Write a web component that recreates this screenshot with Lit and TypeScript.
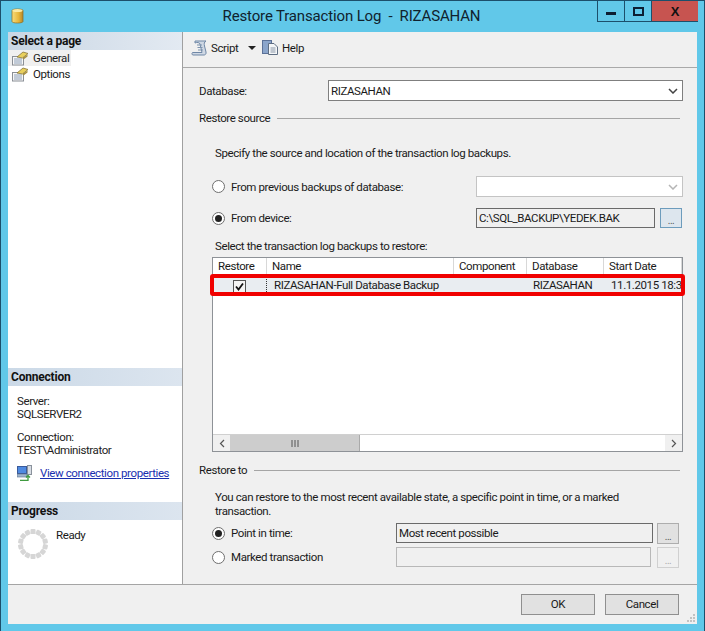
import { LitElement, html, css, svg } from "lit";
import { customElement } from "lit/decorators.js";

const pageIcon = html`<svg class="pico" width="17" height="16" viewBox="0 0 17 16">
  <rect x="0.5" y="6.5" width="11" height="8.5" fill="#f7f7f7" stroke="#8a8f96"/>
  <path d="M2 9h8M2 11h8M2 13h8" stroke="#8c9fb8" stroke-width="1"/>
  <path d="M5 7 L11 2 L16 3.5 L10.5 8Z" fill="#e8cf5c" stroke="#86753a" stroke-width="0.8"/>
  <path d="M11 8 L15.5 4.5 L15.5 6.5 L11.5 9.5Z" fill="#a88f3c"/>
</svg>`;

const spinner = html`<svg width="32" height="32" viewBox="0 0 32 32">
  ${Array.from({ length: 14 }, (_, i) => svg`<rect x="13.5" y="1" width="5" height="5" rx="1" fill="#d6d6d6" transform="rotate(${(i * 360) / 14} 16 16)"/>`)}
</svg>`;

const radio = (on: boolean) => html`<span class="radio ${on ? "on" : ""}"></span>`;

@customElement("app-root")
export class AppRoot extends LitElement {
  static styles = css`
    :host { display: block; width: 705px; height: 631px; overflow: hidden; font-family: "Roboto", "Liberation Sans", sans-serif; font-size: 11.5px; letter-spacing: -0.4px; color: #1a1a1a; }
    .win { box-sizing: border-box; width: 705px; height: 631px; background: #61c8e9; border: 1px solid #1c4f6b; border-bottom: none; display: flex; flex-direction: column; padding: 0 7px 7px 7px; }
    .title { height: 31px; flex: none; display: grid; grid-template-columns: 1fr auto 1fr; align-items: start; margin-right: -1px; }
    .title .db { margin: 6px 0 0 2px; }
    .title .t { font-size: 15px; letter-spacing: -0.15px; line-height: 18px; margin-top: 6px; padding-right: 3px; color: #10222e; white-space: pre; }
    .wbtns { justify-self: end; display: flex; height: 20px; border: 1px solid #1c4f6b; border-top: none; border-right: none; }
    .wb { width: 26px; display: flex; align-items: center; justify-content: center; border-right: 1px solid #1c4f6b; }
    .wb.x { width: 46px; background: #c75450; border-right: none; font: bold 13px "Liberation Sans", sans-serif; color: #111; }
    .bar { width: 10px; height: 3px; background: #0d1f33; margin-top: 4px; }
    .sq { width: 7px; height: 5px; border: 2px solid #0d1f33; }
    .body { flex: 1; display: flex; min-height: 0; background: #f0f0f0; }
    .side { width: 175px; flex: none; box-sizing: border-box; background: #fff; border-right: 1px solid #a0a0a0; display: flex; flex-direction: column; }
    .hd { height: 18px; line-height: 18px; padding-left: 3px; font-weight: 700; font-size: 12px; letter-spacing: -0.2px; color: #111; background: linear-gradient(90deg, #cbd9e7, #dce5ef); flex: none; }
    .hd.sel { background: linear-gradient(90deg, #c9d6e4, #e3eaf2); }
    .nav { flex: 1; }
    .item { height: 16px; line-height: 16px; display: flex; align-items: center; padding-left: 4px; width: fit-content; }
    .item.act { background: #f0f0f0; padding-right: 2px; }
    .item .pico { margin-right: 4px; }
    .conn { padding: 9px 0 0 9px; height: 116px; box-sizing: border-box; line-height: 13px; flex: none; color: #222; }
    .conn p { margin: 0 0 10px; }
    .link { display: flex; align-items: center; gap: 7px; margin-top: -2px; color: #1a2fb0; white-space: nowrap; }
    .link svg { flex: none; }
    .link span { text-decoration: underline; }
    .prog { height: 64px; flex: none; display: flex; padding: 8px 0 0 9px; box-sizing: border-box; }
    .prog span { margin: 0 0 0 7px; line-height: 14px; }
    .main { flex: 1; display: flex; flex-direction: column; min-width: 0; }
    .tools { height: 36px; flex: none; box-sizing: border-box; border-bottom: 1px solid #a9a9a9; display: flex; align-items: center; padding: 0 0 4px 8px; }
    .tools span { margin-left: 3px; }
    .arrow { width: 0; height: 0; border: 4px solid transparent; border-top: 4px solid #222; border-bottom: none; margin: 0 6px 0 10px; }
    .form { padding: 12px 14px 0 16px; flex: 1; }
    .row { display: flex; align-items: center; }
    .db-row { height: 21px; }
    .db-row label { width: 129px; }
    .box { box-sizing: border-box; background: #fff; border: 1px solid #7f7f7f; height: 100%; display: flex; align-items: center; padding-left: 2px; }
    .grow { flex: 1; justify-content: space-between; padding-right: 4px; }
    .sec { height: 16px; margin-top: 9px; margin-right: 3px; }
    .sec i { flex: 1; height: 1px; background: #a5a5a5; margin-left: 7px; }
    .note { margin: 19px 0 0 16px; line-height: 16px; }
    .r1 { margin: 15px 0 0 13px; height: 21px; }
    .r2 { margin: 11px 0 0 13px; height: 20px; }
    .radio { box-sizing: border-box; width: 13px; height: 13px; border-radius: 50%; border: 1px solid #6f6f6f; background: #fff; display: flex; align-items: center; justify-content: center; flex: none; }
    .radio.on::after { content: ""; width: 7px; height: 7px; border-radius: 50%; background: #222; }
    .rl { margin-left: 6px; width: 245px; }
    .ro { width: 179px; background: #f0f0f0; border-color: #6a6a6a; }
    .dots { box-sizing: border-box; width: 22px; height: 20px; margin-left: 5px; background: #e1e1e1; border: 1px solid #adadad; font-size: 10px; display: flex; align-items: flex-end; justify-content: center; line-height: 12px; color: #555; }
    .dots.blue { background: #dde6ee; border-color: #6d9cbc; }
    .sel-note { margin: 10px 0 0 16px; line-height: 16px; }
    .table { box-sizing: border-box; margin: 3px 0 0 13px; height: 195px; border: 1px solid #8e9297; background: #fff; display: flex; flex-direction: column; position: relative; overflow: visible; }
    .cols { display: grid; grid-template-columns: 54px 187px 73px 77px 1fr; }
    .th { height: 19px; line-height: 17px; padding-left: 5px; box-sizing: border-box; border-right: 1px solid #d8d8d8; border-bottom: 1px solid #d8d8d8; overflow: hidden; white-space: nowrap; }
    .th:last-child { border-right: none; }
    .td { height: 19px; line-height: 17px; background: #e9edf1; padding-left: 7px; white-space: nowrap; overflow: hidden; }
    .td.c { padding: 0; display: flex; align-items: center; justify-content: center; border-right: 1px dotted #333; box-sizing: border-box; }
    .cb { box-sizing: border-box; width: 13px; height: 13px; background: #f4f4f4; border: 1px solid #555; display: flex; margin-top: -1px; }
    .red { position: absolute; left: -3px; right: -3px; top: 16px; height: 22px; box-sizing: border-box; border: 4px solid #f00000; border-radius: 3px; pointer-events: none; }
    .spacer { flex: 1; }
    .sb { height: 17px; flex: none; display: flex; align-items: stretch; background: #fff; border-top: 1px solid #d0d0d0; box-sizing: border-box; }
    .sb .end { width: 17px; display: flex; align-items: center; justify-content: center; background: #f0f0f0; }
    .thumb { box-sizing: border-box; width: 130px; background: #cdcdcd; border-right: 1px solid #aaa; display: flex; align-items: center; justify-content: center; }
    .rt { margin: 12px 0 0 16px; line-height: 14px; width: 440px; }
    .r3 { margin: 5px 0 0 13px; height: 20px; }
    .r4 { margin: 4px 0 0 13px; height: 20px; }
    .rl2 { margin-left: 6px; width: 165px; }
    .in1 { width: 257px; background: #f0f0f0; border-color: #6a6a6a; height: 20px; }
    .in2 { width: 255px; background: #f0f0f0; border-color: #b8b8b8; height: 20px; }
    .r3 .dots, .r4 .dots { margin-left: 4px; width: 22px; height: 21px; }
    .r4 .dots { margin-left: 6px; background: #f0f0f0; border-color: #d0d0d0; color: #aaa; }
    .foot { height: 40px; flex: none; box-sizing: border-box; background: #f0f0f0; border-top: 1px solid #a5a5a5; display: flex; justify-content: flex-end; gap: 10px; padding: 9px 18px 0 0; position: relative; }
    .btn { width: 74px; height: 21px; box-sizing: border-box; background: #e1e1e1; border: 1px solid #8f8f8f; text-align: center; line-height: 19px; }
    .grip { position: absolute; right: 1px; bottom: 1px; }
  `;

  render() {
    return html`<div class="win">
      <div class="title">
        <svg class="db" width="16" height="18" viewBox="0 0 16 18">
          <defs><linearGradient id="g" x1="0" x2="1"><stop offset="0" stop-color="#f7dc7c"/><stop offset="0.6" stop-color="#e8b63a"/><stop offset="1" stop-color="#b5862a"/></linearGradient></defs>
          <path d="M2 3.5C2 1.5 13 1.5 13 3.5V14.5C13 16.5 2 16.5 2 14.5Z" fill="url(#g)" stroke="#8a6a20" stroke-width="0.7"/>
          <ellipse cx="7.5" cy="3.5" rx="5" ry="1.6" fill="#fbe9a4"/>
        </svg>
        <div class="t">Restore Transaction Log  -  RIZASAHAN</div>
        <div class="wbtns">
          <div class="wb"><div class="bar"></div></div>
          <div class="wb"><div class="sq"></div></div>
          <div class="wb x">X</div>
        </div>
      </div>
      <div class="body">
        <div class="side">
          <div class="hd sel">Select a page</div>
          <div class="nav">
            <div class="item act">${pageIcon}General</div>
            <div class="item">${pageIcon}Options</div>
          </div>
          <div class="hd">Connection</div>
          <div class="conn">
            <p>Server:<br />SQLSERVER2</p>
            <p>Connection:<br />TEST\\Administrator</p>
            <div class="link">
              <svg width="16" height="16" viewBox="0 0 16 16">
                <rect x="0.5" y="1.5" width="9" height="7" fill="#4f8ae0" stroke="#3a5a9a"/>
                <rect x="0" y="9" width="10" height="3" fill="#9fb4cc" stroke="#5a6f8a" stroke-width="0.6"/>
                <rect x="10.5" y="0.5" width="4" height="9" fill="#d8dde4" stroke="#8a929c"/>
                <path d="M3 15.5H11V11M9 12.5L11 10.5L13 12.5" fill="none" stroke="#3f9a3f" stroke-width="1.3"/>
              </svg>
              <span>View connection properties</span>
            </div>
          </div>
          <div class="hd">Progress</div>
          <div class="prog">${spinner}<span>Ready</span></div>
        </div>
        <div class="main">
          <div class="tools">
            <svg width="17" height="16" viewBox="0 0 17 16">
              <path d="M4 1H15C13 2 13 4 13.5 6L15 12C15.5 14 14 15 13 15H2C1 15 0.5 13.5 1.5 12.5H11L9 4C8.7 2.5 6 2 4 3Z" fill="#cfd8e4" stroke="#6f87a6" stroke-width="1"/>
              <path d="M6 5H11M6.5 7.5H11.5M7 10H12" stroke="#7d93ae"/>
            </svg>
            <span style="width:27px">Script</span>
            <i class="arrow"></i>
            <svg width="17" height="17" viewBox="0 0 17 17">
              <rect x="0.5" y="1.5" width="9" height="13" fill="#8ba5cb" stroke="#5b7198"/>
              <path d="M6.5 4.5H12L15.5 8V15.5H6.5Z" fill="#f4f6f8" stroke="#5f6e83"/>
              <path d="M8.5 9H13.5M8.5 11H13.5M8.5 13H13.5" stroke="#8b97a8"/>
            </svg>
            <span>Help</span>
          </div>
          <div class="form">
            <div class="row db-row"><label>Database:</label>
              <div class="box grow" style="flex:1">RIZASAHAN
                <svg width="10" height="6" viewBox="0 0 10 6"><path d="M1 1L5 5L9 1" fill="none" stroke="#444" stroke-width="1.5"/></svg>
              </div>
            </div>
            <div class="row sec">Restore source<i></i></div>
            <div class="note">Specify the source and location of the transaction log backups.</div>
            <div class="row r1">${radio(false)}<span class="rl">From previous backups of database:</span>
              <div class="box grow" style="border-color:#c4c4c4">
                <span></span>
                <svg width="10" height="6" viewBox="0 0 10 6"><path d="M1 1L5 5L9 1" fill="none" stroke="#b5b5b5" stroke-width="1.5"/></svg>
              </div>
            </div>
            <div class="row r2">${radio(true)}<span class="rl">From device:</span>
              <div class="box ro">C:\\SQL_BACKUP\\YEDEK.BAK</div>
              <div class="dots blue">...</div>
            </div>
            <div class="sel-note">Select the transaction log backups to restore:</div>
            <div class="table">
              <div class="cols">
                <div class="th">Restore</div>
                <div class="th">Name</div>
                <div class="th">Component</div>
                <div class="th">Database</div>
                <div class="th">Start Date</div>
                <div class="td c"><span class="cb"><svg width="11" height="11" viewBox="0 0 11 11"><path d="M2 5.5L4.5 8.5L9 2.5" fill="none" stroke="#111" stroke-width="1.8"/></svg></span></div>
                <div class="td">RIZASAHAN-Full Database Backup</div>
                <div class="td"></div>
                <div class="td" style="padding-left:6px">RIZASAHAN</div>
                <div class="td">11.1.2015 18:3</div>
              </div>
              <div class="spacer"></div>
              <div class="sb">
                <div class="end"><svg width="6" height="9" viewBox="0 0 6 9"><path d="M5 1L1.5 4.5L5 8" fill="none" stroke="#555" stroke-width="1.2"/></svg></div>
                <div class="thumb"><svg width="8" height="7" viewBox="0 0 8 7"><path d="M1 0V7M4 0V7M7 0V7" stroke="#555"/></svg></div>
                <div style="flex:1"></div>
                <div class="end"><svg width="6" height="9" viewBox="0 0 6 9"><path d="M1 1L4.5 4.5L1 8" fill="none" stroke="#555" stroke-width="1.2"/></svg></div>
              </div>
              <div class="red"></div>
            </div>
            <div class="row sec" style="margin-top:10px">Restore to<i></i></div>
            <div class="rt">You can restore to the most recent available state, a specific point in time, or a marked transaction.</div>
            <div class="row r3">${radio(true)}<span class="rl2">Point in time:</span>
              <div class="box in1">Most recent possible</div><div class="dots">...</div>
            </div>
            <div class="row r4">${radio(false)}<span class="rl2">Marked transaction</span>
              <div class="box in2"></div><div class="dots">...</div>
            </div>
          </div>
        </div>
      </div>
      <div class="foot">
        <div class="btn">OK</div>
        <div class="btn">Cancel</div>
        <svg class="grip" width="9" height="9" viewBox="0 0 9 9" fill="#c2c2c2">
          <rect x="6" y="0" width="2" height="2"/><rect x="3" y="3" width="2" height="2"/><rect x="6" y="3" width="2" height="2"/>
          <rect x="0" y="6" width="2" height="2"/><rect x="3" y="6" width="2" height="2"/><rect x="6" y="6" width="2" height="2"/>
        </svg>
      </div>
    </div>`;
  }
}
